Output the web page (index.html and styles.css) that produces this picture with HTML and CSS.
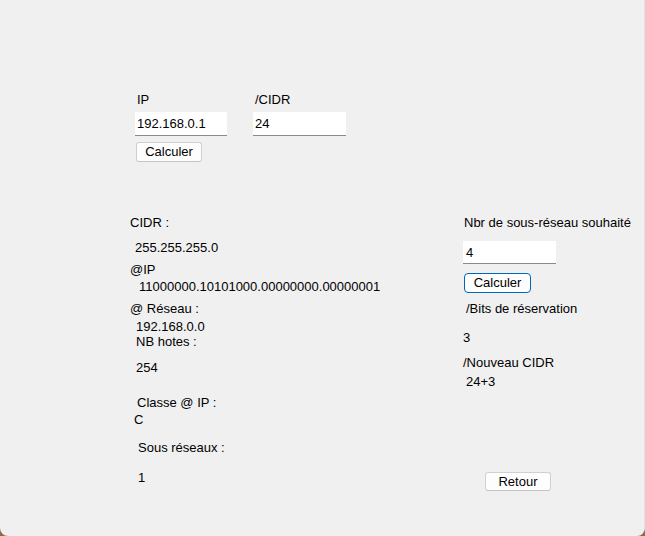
FILE: index.html
```html
<!DOCTYPE html>
<html lang="fr">
<head>
<meta charset="utf-8">
<title>Calcul de sous-réseaux</title>
<link rel="stylesheet" href="styles.css">
</head>
<body>
<div class="window">
  <div class="top">
    <div class="field field-ip">
      <div class="label lbl-ip">IP</div>
      <div class="textbox tb-ip">192.168.0.1</div>
      <div class="btn btn-calc1">Calculer</div>
    </div>
    <div class="field field-cidr">
      <div class="label">/CIDR</div>
      <div class="textbox tb-cidr">24</div>
    </div>
  </div>

  <div class="main">
    <div class="col-left">
      <div class="label">CIDR :</div>
      <div class="label l-mask">255.255.255.0</div>
      <div class="label l-ip">@IP</div>
      <div class="label l-bin">11000000.10101000.00000000.00000001</div>
      <div class="label l-res">@ Réseau :</div>
      <div class="label l-resv">192.168.0.0</div>
      <div class="label l-nb">NB hotes :</div>
      <div class="label l-nbv">254</div>
      <div class="label l-cls">Classe @ IP :</div>
      <div class="label l-clsv">C</div>
      <div class="label l-sr">Sous réseaux :</div>
      <div class="label l-srv">1</div>
    </div>
    <div class="col-right">
      <div class="label r-nbr">Nbr de sous-réseau souhaité</div>
      <div class="textbox tb-nbr">4</div>
      <div class="btn btn-focus btn-calc2">Calculer</div>
      <div class="label r-bits">/Bits de réservation</div>
      <div class="label r-bitsv">3</div>
      <div class="label r-nc">/Nouveau CIDR</div>
      <div class="label r-ncv">24+3</div>
      <div class="btn btn-retour">Retour</div>
    </div>
  </div>
</div>
</body>
</html>
```

FILE: styles.css
```css
html, body {
  margin: 0;
  padding: 0;
  background: #8c6a48;
}

.window {
  box-sizing: border-box;
  width: 645px;
  height: 536px;
  background: #f0f0f0;
  border-radius: 0 0 8px 8px;
  border-right: 1px solid #e2e2e2;
  padding-top: 92px;
  font-family: "Liberation Sans", Arial, sans-serif;
  font-size: 13px;
  line-height: 15px;
  color: #000;
  overflow: hidden;
}

.label {
  white-space: nowrap;
}

/* top section */
.top {
  display: flex;
  margin-left: 135px;
  gap: 26px;
}

.field {
  display: flex;
  flex-direction: column;
  align-items: flex-start;
}

.field .label {
  padding-left: 2px;
}

.textbox {
  box-sizing: border-box;
  background: #fff;
  border-bottom: 1px solid #8a8a8a;
  height: 24px;
  padding: 4px 2px 0 2px;
  margin-top: 5px;
}

.tb-ip { width: 92px; }
.tb-cidr { width: 93px; }

.btn {
  box-sizing: border-box;
  background: #fdfdfd;
  border: 1px solid #d0d0d0;
  border-bottom-color: #c4c4c4;
  border-radius: 3px;
  height: 20px;
  line-height: 17px;
  text-align: center;
}

.btn-calc1 {
  width: 66px;
  margin-top: 6px;
  margin-left: 1px;
}

.btn-focus {
  border: 1px solid #0067c0;
  border-radius: 4px;
}

/* main section */
.main {
  display: flex;
  margin-top: 53px;
}

.col-left {
  margin-left: 130px;
  width: 333px;
}

.l-mask { margin-top: 10px; padding-left: 5px; }
.l-ip   { margin-top: 7px; }
.l-bin  { margin-top: 2px; padding-left: 9px; }
.l-res  { margin-top: 7px; }
.l-resv { margin-top: 3px; padding-left: 6px; }
.l-nb   { margin-top: 0; padding-left: 6px; }
.l-nbv  { margin-top: 11px; padding-left: 6px; }
.l-cls  { margin-top: 20px; padding-left: 7px; }
.l-clsv { margin-top: 2px; padding-left: 4px; }
.l-sr   { margin-top: 13px; padding-left: 8px; }
.l-srv  { margin-top: 15px; padding-left: 8px; }

.col-right {
  display: flex;
  flex-direction: column;
  align-items: flex-start;
}

.r-nbr   { padding-left: 1px; }
.tb-nbr  { width: 93px; height: 23px; margin-top: 11px; padding-left: 3px; }
.btn-calc2 { width: 67px; margin-top: 9px; margin-left: 1px; }
.r-bits  { margin-top: 8px; padding-left: 3px; }
.r-bitsv { margin-top: 14px; }
.r-nc    { margin-top: 10px; }
.r-ncv   { margin-top: 4px; padding-left: 3px; }
.btn-retour {
  width: 66px;
  height: 19px;
  line-height: 17px;
  margin-top: 83px;
  margin-left: 22px;
}
```
